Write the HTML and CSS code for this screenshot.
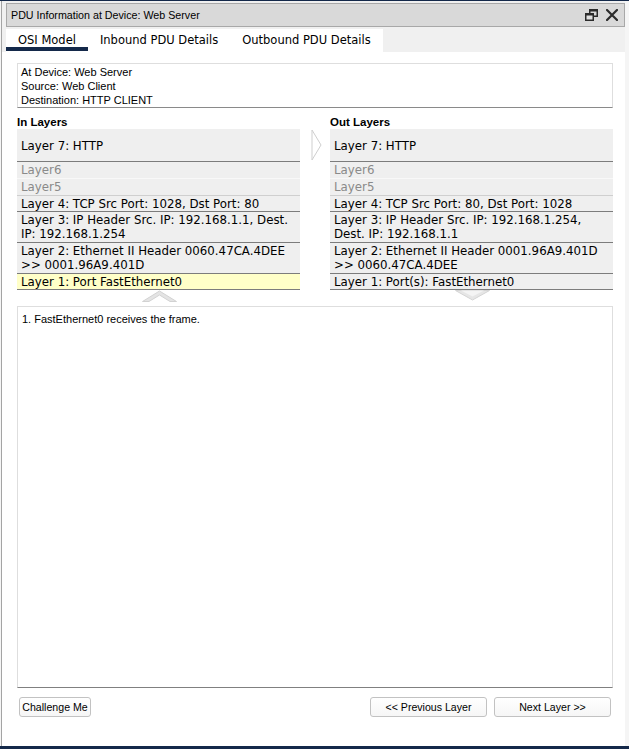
FILE: index.html
```html
<!DOCTYPE html>
<html>
<head>
<meta charset="utf-8">
<title>PDU Information</title>
<link rel="stylesheet" href="styles.css">
</head>
<body>
<div class="window">
  <div class="inner">
    <div class="titlewrap">
      <div class="titlebar">
        <span class="title">PDU Information at Device: Web Server</span>
        <span class="winbtns">
          <svg class="ico" width="13" height="12" viewBox="0 0 13 12">
            <rect x="4.75" y="0.75" width="7.5" height="6.5" fill="none" stroke="#2b2b2b" stroke-width="1.5"/>
            <rect x="4" y="0" width="9" height="2.5" fill="#2b2b2b"/>
            <rect x="0.75" y="4.75" width="7.5" height="6.5" fill="#e0e0e0" stroke="#2b2b2b" stroke-width="1.5"/>
            <rect x="0" y="4" width="9" height="2.5" fill="#2b2b2b"/>
          </svg>
          <svg class="ico" width="12" height="12" viewBox="0 0 12 12">
            <path d="M1 1 L11 11 M11 1 L1 11" stroke="#2b2b2b" stroke-width="2.2" stroke-linecap="square"/>
          </svg>
        </span>
      </div>
    </div>
    <div class="tabrow">
      <div class="tabs">
        <span class="tab active">OSI Model</span>
        <span class="tab">Inbound PDU Details</span>
        <span class="tab">Outbound PDU Details</span>
      </div>
    </div>
    <div class="panel">
      <div class="infobox">
        <div>At Device: Web Server</div>
        <div>Source: Web Client</div>
        <div>Destination: HTTP CLIENT</div>
      </div>
      <div class="columns">
        <div class="col">
          <div class="label">In Layers</div>
          <div class="list">
            <div class="row l7">Layer 7: HTTP</div>
            <div class="row dim l6">Layer6</div>
            <div class="row dim l5">Layer5</div>
            <div class="row">Layer 4: TCP Src Port: 1028, Dst Port: 80</div>
            <div class="row two">Layer 3: IP Header Src. IP: 192.168.1.1, Dest. IP: 192.168.1.254</div>
            <div class="row two">Layer 2: Ethernet II Header 0060.47CA.4DEE &gt;&gt; 0001.96A9.401D</div>
            <div class="row sel">Layer 1: Port FastEthernet0</div>
          </div>
          <div class="arrowzone">
            <svg width="35" height="12" viewBox="0 0 35 12">
              <polygon points="0.5,11.5 17.5,1 34.5,11.5 28,11.5 17.5,5 7,11.5" fill="#e4e4e4" stroke="#d2d2d2" stroke-width="1"/>
            </svg>
          </div>
        </div>
        <div class="mid">
          <svg width="11" height="32" viewBox="0 0 11 32">
            <polygon points="1,1 10,16 1,31" fill="#fff" stroke="#cfcfcf" stroke-width="1"/>
          </svg>
        </div>
        <div class="col">
          <div class="label">Out Layers</div>
          <div class="list">
            <div class="row l7">Layer 7: HTTP</div>
            <div class="row dim l6">Layer6</div>
            <div class="row dim l5">Layer5</div>
            <div class="row">Layer 4: TCP Src Port: 80, Dst Port: 1028</div>
            <div class="row two">Layer 3: IP Header Src. IP: 192.168.1.254, Dest. IP: 192.168.1.1</div>
            <div class="row two">Layer 2: Ethernet II Header 0001.96A9.401D &gt;&gt; 0060.47CA.4DEE</div>
            <div class="row">Layer 1: Port(s): FastEthernet0</div>
          </div>
          <div class="arrowzone">
            <svg width="35" height="11" viewBox="0 0 35 11">
              <polygon points="0.5,0.5 34.5,0.5 17.5,10" fill="#e6e6e6" stroke="#d4d4d4" stroke-width="1"/>
              <polygon points="6,0.5 29,0.5 17.5,6.5" fill="#f4f4f4"/>
            </svg>
          </div>
        </div>
      </div>
      <div class="desc">1. FastEthernet0 receives the frame.</div>
      <div class="buttons">
        <button class="btn challenge">Challenge Me</button>
        <div class="navbtns">
          <button class="btn wide">&lt;&lt; Previous Layer</button>
          <button class="btn wide">Next Layer &gt;&gt;</button>
        </div>
      </div>
    </div>
  </div>
</div>
</body>
</html>
```
FILE: styles.css
```css
html, body {
  margin: 0;
  padding: 0;
}
body {
  background: #f5f5f5;
  font-family: "Liberation Sans", Arial, sans-serif;
  font-size: 11px;
  color: #000;
}
.window {
  width: 629px;
  height: 749px;
  box-sizing: border-box;
  border-top: 1px solid #14294a;
  border-bottom: 3px solid #14294a;
  padding-left: 1px;
  display: flex;
  flex-direction: column;
  background: #f5f5f5;
}
.inner {
  flex: 1;
  margin-right: 4px;
  border-left: 1px solid #a4a4a4;
  display: flex;
  flex-direction: column;
  background: #f0f0f0;
}
.titlewrap {
  padding: 2px 0 0 4px;
}
.titlebar {
  height: 22px;
  border: 1px solid #a8a8a8;
  background: #d9d9d9;
  display: flex;
  align-items: center;
  justify-content: space-between;
  padding: 0 6px 0 4px;
}
.title {
  font-size: 10.7px;
  line-height: 22px;
  color: #000;
}
.winbtns {
  display: flex;
  align-items: center;
  gap: 8px;
}
.ico {
  display: block;
}
.tabrow {
  padding: 2px 0 0 4px;
  display: flex;
}
.tabs {
  display: flex;
  background: #fff;
  padding-bottom: 1px;
}
.tab {
  font-family: "DejaVu Sans", Verdana, sans-serif;
  font-size: 11.5px;
  line-height: 14px;
  padding: 4px 12px 0;
  border-bottom: 4px solid transparent;
  color: #000;
}
.tab.active {
  border-bottom-color: #14294a;
}
.panel {
  flex: 1;
  background: #fff;
  padding: 11px 12px 29px 15px;
  display: flex;
  flex-direction: column;
}
.infobox {
  border: 1px solid #dedede;
  border-bottom: 1px solid #8a8a8a;
  padding: 1px 3px 0;
  line-height: 14px;
  font-size: 11px;
}
.columns {
  display: flex;
  margin-top: 7px;
}
.col {
  flex: 1;
  display: flex;
  flex-direction: column;
}
.mid {
  width: 30px;
  padding-top: 14px;
  display: flex;
  justify-content: center;
}
.mid svg {
  display: block;
  margin-left: 2px;
}
.label {
  font-weight: bold;
  font-size: 11.5px;
  line-height: 14px;
}
.list {
  background: #efefef;
  font-family: "DejaVu Sans", Verdana, sans-serif;
  font-size: 11.8px;
}
.row {
  line-height: 14px;
  padding: 1px 4px 0;
  border-bottom: 1px solid #7c7c7c;
}
.row.two {
  padding-bottom: 1px;
}
.row.l7 {
  height: 30px;
  padding-top: 2px;
  padding-bottom: 0;
  line-height: 30px;
}
.row.dim {
  color: #8a8a8a;
  padding: 1px 4px 1px;
}
.row.l6 {
  border-bottom-color: #f8f8f8;
}
.row.l5 {
  border-bottom-color: #cfcfcf;
}
.row.sel {
  background: #ffffc8;
}
.arrowzone {
  height: 16px;
  display: flex;
  justify-content: center;
  align-items: flex-start;
}
.arrowzone svg {
  display: block;
  margin-left: 1px;
}
.desc {
  flex: 1;
  border: 1px solid #dedede;
  border-bottom: 1px solid #808080;
  padding: 5px 4px 6px;
  font-size: 11px;
  line-height: 14px;
}
.buttons {
  display: flex;
  justify-content: space-between;
  margin-top: 9px;
  padding: 0 2px;
}
.navbtns {
  display: flex;
  gap: 7px;
}
.btn {
  height: 20px;
  border: 1px solid #c2c2c2;
  border-radius: 3px;
  background: linear-gradient(#ffffff, #f6f6f6);
  font-family: "Liberation Sans", Arial, sans-serif;
  font-size: 10.6px;
  color: #000;
  padding: 0;
  margin: 0;
  white-space: nowrap;
}
.btn.challenge {
  width: 72px;
}
.btn.wide {
  width: 117px;
}
```
